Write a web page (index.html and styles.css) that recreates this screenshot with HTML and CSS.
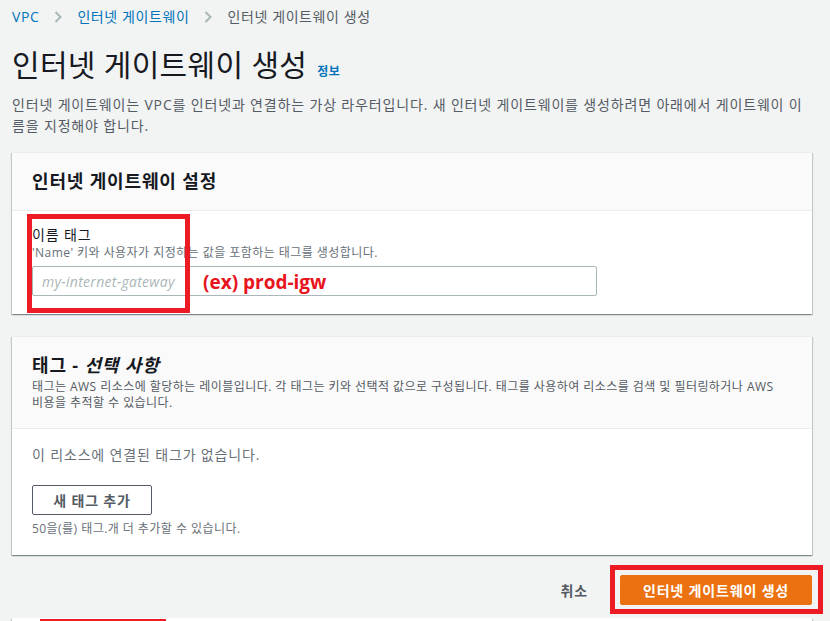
FILE: index.html
```html
<!DOCTYPE html>
<html lang="ko">
<head>
<meta charset="utf-8">
<title>인터넷 게이트웨이 생성</title>
<link rel="stylesheet" href="styles.css">
</head>
<body>
<div class="page">
  <nav class="crumbs">
    <a class="crumb-link">VPC</a>
    <svg class="chev" width="8" height="12" viewBox="0 0 8 12"><path d="M1.5 1l5 5-5 5" fill="none" stroke="#aab7b8" stroke-width="2"/></svg>
    <a class="crumb-link">인터넷 게이트웨이</a>
    <svg class="chev" width="8" height="12" viewBox="0 0 8 12"><path d="M1.5 1l5 5-5 5" fill="none" stroke="#aab7b8" stroke-width="2"/></svg>
    <span class="crumb-cur">인터넷 게이트웨이 생성</span>
  </nav>

  <h1 class="title">인터넷 게이트웨이 생성 <a class="info">정보</a></h1>
  <p class="lead">인터넷 게이트웨이는 VPC를 인터넷과 연결하는 가상 라우터입니다. 새 인터넷 게이트웨이를 생성하려면 아래에서 게이트웨이 이름을 지정해야 합니다.</p>

  <section class="card">
    <header class="card-head">
      <h2 class="card-title">인터넷 게이트웨이 설정</h2>
    </header>
    <div class="card-body">
      <label class="field-label">이름 태그</label>
      <div class="field-desc">'Name' 키와 사용자가 지정하는 값을 포함하는 태그를 생성합니다.</div>
      <input class="text-input" type="text" placeholder="my-internet-gateway">
      <div class="mark mark-name"></div>
      <div class="note">(ex) prod-igw</div>
    </div>
  </section>

  <section class="card">
    <header class="card-head">
      <h2 class="card-title">태그 - <em>선택 사항</em></h2>
      <p class="card-desc">태그는 AWS 리소스에 할당하는 레이블입니다. 각 태그는 키와 선택적 값으로 구성됩니다. 태그를 사용하여 리소스를 검색 및 필터링하거나 AWS 비용을 추적할 수 있습니다.</p>
    </header>
    <div class="card-body">
      <div class="empty">이 리소스에 연결된 태그가 없습니다.</div>
      <button class="btn">새 태그 추가</button>
      <div class="hint">50을(를) 태그.개 더 추가할 수 있습니다.</div>
    </div>
  </section>

  <div class="actions">
    <button class="btn-link">취소</button>
    <div class="mark-wrap">
      <button class="btn-primary">인터넷 게이트웨이 생성</button>
    </div>
  </div>

  <section class="card card-next">
    <div class="mark mark-next"></div>
  </section>
</div>
</body>
</html>
```

FILE: styles.css
```css
* { box-sizing: border-box; }
html, body { margin: 0; padding: 0; }
body {
  background: #f2f3f3;
  font-family: "Open Sans", "Noto Sans CJK KR", sans-serif;
  color: #16191f;
  font-size: 14px;
  letter-spacing: 0.06em;
}
.page {
  padding: 7px 18px 40px 12px;
}
.crumbs {
  display: flex;
  align-items: center;
  height: 20px;
  line-height: 20px;
  font-size: 14px;
  letter-spacing: 0.6px;
}
.crumb-link { color: #0073bb; }
.crumb-cur { color: #545b64; }
.chev { margin: 0 15px; }

.title {
  margin: 20px 0 0;
  font-size: 30px;
  line-height: 36px;
  font-weight: 400;
  letter-spacing: 0.3px;
}
.info {
  font-size: 12px;
  line-height: 1;
  font-weight: 700;
  color: #0073bb;
  margin-left: 2px;
  letter-spacing: 0.5px;
}
.lead {
  margin: 11px 0 0;
  font-size: 14px;
  line-height: 21px;
  color: #545b64;
}

.card {
  background: #fff;
  margin-top: 16px;
  border-top: 1px solid #eaeded;
  box-shadow: 0 1px 1px 0 rgba(0, 28, 36, 0.3), 1px 1px 1px 0 rgba(0, 28, 36, 0.15), -1px 1px 1px 0 rgba(0, 28, 36, 0.15);
}
.card + .card { margin-top: 22px; }
.card-head {
  background: #fafafa;
  border-bottom: 1px solid #eaeded;
  padding: 16px 20px 17px;
}
.card-title {
  margin: 0;
  font-size: 18px;
  line-height: 24px;
  font-weight: 700;
}
.card-title em { font-style: italic; }
.card-desc {
  margin: 2px 0 0;
  font-size: 12px;
  line-height: 16px;
  letter-spacing: 0.45px;
  word-break: keep-all;
  color: #545b64;
}
.card-body {
  position: relative;
  padding: 14px 20px 18px;
}
.field-label {
  display: block;
  font-size: 14px;
  line-height: 20px;
  color: #16191f;
}
.field-desc {
  font-size: 12px;
  line-height: 16px;
  letter-spacing: 0.45px;
  color: #687078;
}
.text-input {
  display: block;
  margin-top: 5px;
  width: 565px;
  height: 30px;
  border: 1px solid #aab7b8;
  border-radius: 2px;
  padding: 0 9px;
  font-family: "Open Sans", "Noto Sans CJK KR", sans-serif;
  font-size: 14px;
  letter-spacing: 0.3px;
  background: #fff;
}
.text-input::placeholder { color: #aab7b8; font-style: italic; }

.mark {
  position: absolute;
  border: 5px solid #ed1c24;
  pointer-events: none;
}
.mark-name { left: 15px; top: 3px; width: 163px; height: 99px; }
.note {
  position: absolute;
  left: 191px;
  top: 59px;
  font-size: 19px;
  font-weight: 700;
  line-height: 24px;
  letter-spacing: 0;
  color: #e8141c;
}

.empty {
  font-size: 14px;
  line-height: 20px;
  color: #687078;
  margin-top: 2px;
}
.btn {
  display: block;
  margin-top: 20px;
  width: 120px;
  height: 30px;
  border: 1px solid #545b64;
  border-radius: 2px;
  background: #fff;
  color: #545b64;
  font-family: "Open Sans", "Noto Sans CJK KR", sans-serif;
  font-size: 14px;
  font-weight: 700;
  letter-spacing: 0.06em;
}
.hint {
  margin-top: 6px;
  font-size: 12px;
  line-height: 16px;
  letter-spacing: 0.45px;
  color: #687078;
}

.actions {
  display: flex;
  justify-content: flex-end;
  align-items: center;
  gap: 28px;
  margin-top: 20px;
}
.btn-link {
  border: 0;
  background: none;
  font-family: "Open Sans", "Noto Sans CJK KR", sans-serif;
  font-size: 14px;
  font-weight: 700;
  letter-spacing: 0.06em;
  color: #545b64;
  padding: 0 4px;
  height: 30px;
}
.mark-wrap {
  border: 5px solid #ed1c24;
  padding: 5px 6px 4px 5px;
  margin: -10px -11px -9px -10px;
  display: flex;
}
.btn-primary {
  width: 192px;
  height: 30px;
  border: 1px solid #ec7211;
  border-radius: 2px;
  background: #ec7211;
  color: #fff;
  font-family: "Open Sans", "Noto Sans CJK KR", sans-serif;
  font-size: 14px;
  font-weight: 700;
  letter-spacing: 0.06em;
}
.card.card-next {
  position: relative;
  margin-top: 13px;
  height: 80px;
  border-top: 0;
}
.mark-next { left: 28px; top: 1px; width: 126px; height: 70px; }
```
